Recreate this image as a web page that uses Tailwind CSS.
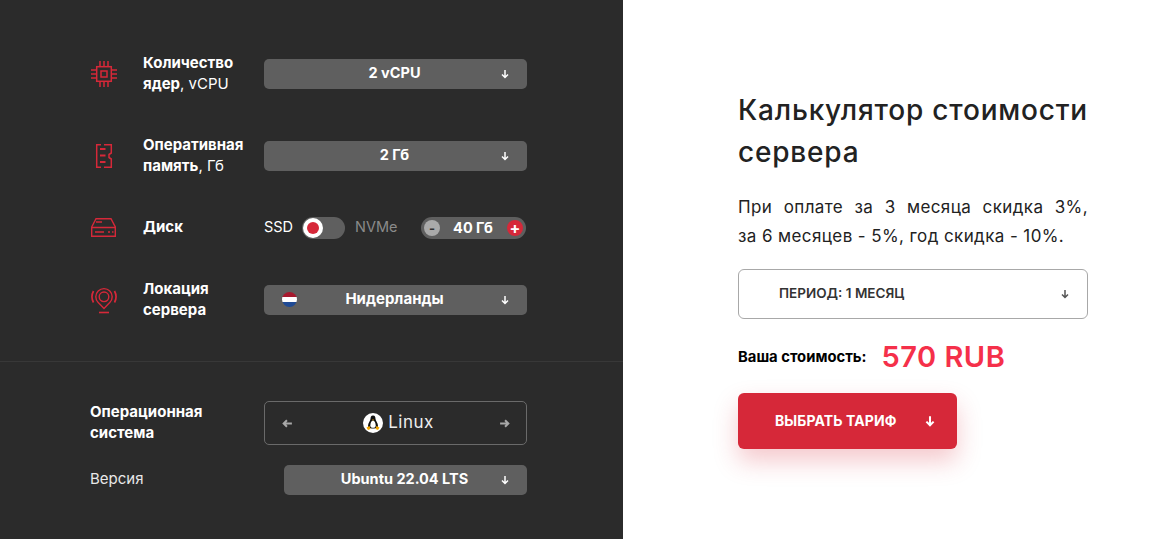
<!DOCTYPE html>
<html lang="ru">
<head>
  <meta charset="UTF-8">
  <title>Калькулятор стоимости сервера</title>
  <script src="https://cdn.jsdelivr.net/npm/@tailwindcss/browser@4"></script>
</head>
<body class="bg-white overflow-hidden font-['Inter','Liberation_Sans',sans-serif]">
  <div class="flex h-[539px] w-[1160px]">
    <!-- left: config -->
    <div class="w-[623px] shrink-0 bg-[#2b2b2b] text-white">
      <div class="pl-[90px] pr-[96px] pt-[52px] h-[361px]">
        <div class="flex items-center h-[44px]">
          <div class="w-[53px] shrink-0">
            <svg class="w-[28px] h-[28px]" viewBox="0 0 28 28" fill="none" stroke="#d62839" stroke-width="1.5"><rect x="6.700" y="6.700" width="14.600" height="14.600"/><rect x="11" y="11" width="6" height="6"/><path d="M10 1v5M14 1v5M18 1v5M10 22v5M14 22v5M18 22v5M1 10h5M1 14h5M1 18h5M22 10h5M22 14h5M22 18h5"/></svg>
          </div>
          <div class="w-[121px] shrink-0 text-[15px] leading-[21px] pb-[2px] whitespace-nowrap"><b class="font-bold">Количество<br>ядер</b>, vCPU</div>
          <div class="relative flex-1 h-[30px] rounded-[5px] bg-[#5f5f5f] flex items-center justify-center pr-[2px] pb-[2px] text-[14.500px] font-bold">2 vCPU
            <svg class="absolute right-[17px] top-[10px] w-[10px] h-[10px]" viewBox="0 0 10 10" fill="none" stroke="#fff" stroke-width="1.500"><path d="M5 1v7.500M2 5.500l3 3 3-3"/></svg>
          </div>
        </div>
        <div class="flex items-center h-[44px] mt-[38px]">
          <div class="w-[53px] shrink-0">
            <svg class="w-[28px] h-[28px]" viewBox="0 0 28 28" fill="none" stroke="#d62839" stroke-width="1.500"><path d="M11 2.700H6.700V25.300H11M14 2.700H21.300V11L19 12.500V15.500L21.300 17V25.300H14"/><path d="M10 7h5.500M10 13.500h5.500M10 20h5.500" stroke-width="2.200"/></svg>
          </div>
          <div class="w-[121px] shrink-0 text-[15px] leading-[21px] pb-[2px] whitespace-nowrap"><b class="font-bold">Оперативная<br>память</b>, Гб</div>
          <div class="relative flex-1 h-[30px] rounded-[5px] bg-[#5f5f5f] flex items-center justify-center pr-[2px] pb-[2px] text-[14.500px] font-bold">2 Гб
            <svg class="absolute right-[17px] top-[10px] w-[10px] h-[10px]" viewBox="0 0 10 10" fill="none" stroke="#fff" stroke-width="1.500"><path d="M5 1v7.500M2 5.500l3 3 3-3"/></svg>
          </div>
        </div>
        <div class="flex items-center h-[30px] mt-[35px]">
          <div class="w-[53px] shrink-0">
            <svg class="w-[28px] h-[28px]" viewBox="0 0 28 28" fill="none" stroke="#d62839" stroke-width="1.400"><path d="M1.700 13L6 4.700H21L25.300 13V22.300H1.700z"/><path d="M1.700 13.500H25.300M5 18H14M18 18h2M22 18h1.500M6 8h6"/></svg>
          </div>
          <div class="w-[121px] shrink-0 text-[15px] font-bold pb-[2px]">Диск</div>
          <span class="text-[14.500px] mr-[9px] pb-[2px]">SSD</span>
          <div class="w-[43px] h-[22px] rounded-full bg-[#5f5f5f] flex items-center pl-[1px]">
            <div class="w-[20px] h-[20px] rounded-full bg-white flex items-center justify-center"><div class="w-[12px] h-[12px] rounded-full bg-[#d62839]"></div></div>
          </div>
          <span class="text-[14.500px] text-[#8a8a8a] ml-[10px] pb-[2px]">NVMe</span>
          <div class="ml-auto mr-[1px] w-[105px] h-[22px] rounded-full bg-[#5f5f5f] flex items-center justify-between px-[3px] text-[14.500px] font-bold">
            <span class="w-[16px] h-[16px] rounded-full bg-[#aaaaaa] text-[#333] flex items-center justify-center text-[13px] leading-none">-</span>
            <span class="pb-[1px] pr-[1px]">40 Гб</span>
            <span class="w-[16px] h-[16px] rounded-full bg-[#d62839] flex items-center justify-center text-[16px] leading-none">+</span>
          </div>
        </div>
        <div class="flex items-center h-[44px] mt-[35px]">
          <div class="w-[53px] shrink-0">
            <svg class="w-[28px] h-[28px]" viewBox="0 0 28 28" fill="none" stroke="#d62839" stroke-width="1.400"><path d="M14 22.500L8.200 16.600A8.200 8.200 0 1 1 19.800 16.600Z"/><circle cx="14" cy="10.800" r="4.800"/><path d="M3.500 16.500A12 12 0 0 1 3.500 5M24.500 5A12 12 0 0 1 24.500 16.500" stroke-width="1.700"/><path d="M9 26.500H19" stroke-width="1.600"/></svg>
          </div>
          <div class="w-[121px] shrink-0 text-[15px] leading-[21px] font-bold pb-[2px]">Локация<br>сервера</div>
          <div class="relative flex-1 h-[30px] rounded-[5px] bg-[#5f5f5f] flex items-center justify-center pr-[2px] pb-[2px] text-[15px] font-bold">
            <span class="absolute left-[18px] top-[7px] w-[15px] h-[15px] rounded-full overflow-hidden flex flex-col">
              <i class="h-[5px] bg-[#a6192e]"></i><i class="h-[5px] bg-white"></i><i class="h-[5px] bg-[#1f4a94]"></i>
            </span>
            Нидерланды
            <svg class="absolute right-[17px] top-[10px] w-[10px] h-[10px]" viewBox="0 0 10 10" fill="none" stroke="#fff" stroke-width="1.500"><path d="M5 1v7.500M2 5.500l3 3 3-3"/></svg>
          </div>
        </div>
      </div>
      <div class="border-t border-[#383838] pl-[90px] pr-[96px] pt-[39px]">
        <div class="flex items-center h-[44px]">
          <div class="w-[174px] shrink-0 text-[15px] leading-[21px] font-bold pb-[2px]">Операционная<br>система</div>
          <div class="flex-1 h-[44px] rounded-[5px] border border-[#6a6a6a] flex items-center justify-between pl-[17px] pr-[16px]">
            <svg class="w-[11px] h-[11px]" viewBox="0 0 10 10" fill="none" stroke="#a8a8a8" stroke-width="1.800"><path d="M9 5H1.500M4.500 2l-3 3 3 3"/></svg>
            <div class="flex items-center gap-[5px] ml-[5px] text-[17px] tracking-[0.5px] text-[#eeeeee]">
              <svg class="w-[20px] h-[20px]" viewBox="0 0 20 20"><circle cx="10" cy="10" r="10" fill="#fff"/><path d="M10 2.500c-2 0-2.500 1.700-2.500 3.500 0 1.500-2.500 4-2.500 7 0 1 1 2.500 5 2.500s5-1.500 5-2.500c0-3-2.500-5.500-2.500-7 0-1.800-.5-3.500-2.500-3.500z" fill="#111"/><path d="M10 7.500c-1.500 0-2.700 2.500-2.700 5 0 1.500 1 2.300 2.700 2.300s2.700-.8 2.700-2.300c0-2.500-1.200-5-2.700-5z" fill="#fff"/><path d="M9 6.500h2l-1 1.200zM3.500 14.500l3-1.500 1 3-2.500 1zM16.500 14.500l-3-1.500-1 3 2.500 1z" fill="#f5a800"/></svg>
              Linux
            </div>
            <svg class="w-[11px] h-[11px]" viewBox="0 0 10 10" fill="none" stroke="#a8a8a8" stroke-width="1.800"><path d="M1 5h7.500M5.500 2l3 3-3 3"/></svg>
          </div>
        </div>
        <div class="flex items-center h-[30px] mt-[20px]">
          <div class="w-[194px] shrink-0 text-[15px] text-[#e8e8e8] pb-[2px]">Версия</div>
          <div class="relative flex-1 h-[30px] rounded-[5px] bg-[#5f5f5f] flex items-center justify-center pr-[2px] pb-[2px] text-[14.500px] font-bold">Ubuntu 22.04 LTS
            <svg class="absolute right-[17px] top-[10px] w-[10px] h-[10px]" viewBox="0 0 10 10" fill="none" stroke="#fff" stroke-width="1.500"><path d="M5 1v7.500M2 5.500l3 3 3-3"/></svg>
          </div>
        </div>
      </div>
    </div>
    <!-- right: result -->
    <div class="flex-1 pl-[115px] pr-[72px] pt-[89px]">
      <h1 class="text-[28px] leading-[42px] font-medium tracking-[0.8px] text-[#222]">Калькулятор стоимости сервера</h1>
      <p class="mt-[20px] text-[17px] leading-[29px] tracking-[0.4px] text-[#222]">
        <span class="block [text-align-last:justify]">При оплате за 3 месяца скидка 3%,</span>
        <span class="block">за 6 месяцев - 5%, год скидка - 10%.</span>
      </p>
      <div class="mt-[18px] h-[50px] rounded-[6px] border border-[#a8a8a8] flex items-center justify-between pl-[40px] pr-[17px] pb-[1px] text-[13.500px] font-semibold text-[#333]">
        ПЕРИОД: 1 МЕСЯЦ
        <svg class="w-[10px] h-[10px]" viewBox="0 0 10 10" fill="none" stroke="#555" stroke-width="1.500"><path d="M5 1v7.500M2 5.500l3 3 3-3"/></svg>
      </div>
      <div class="mt-[20px] flex items-center h-[36px]">
        <span class="text-[14.800px] font-bold text-black">Ваша стоимость:</span>
        <span class="ml-[15px] text-[29px] tracking-[0.5px] font-semibold text-[#f5304a]">570 RUB</span>
      </div>
      <div class="mt-[18px] w-[219px] h-[56px] rounded-[6px] bg-[#d62839] shadow-[0_12px_24px_rgba(214,40,57,0.25)] flex items-center justify-between pl-[37px] pr-[21px] pb-[1px] text-white text-[14px] tracking-[0.1px] font-bold">
        ВЫБРАТЬ ТАРИФ
        <svg class="w-[12px] h-[12px]" viewBox="0 0 10 10" fill="none" stroke="#fff" stroke-width="1.700"><path d="M5 1v7.500M2 5.500l3 3 3-3"/></svg>
      </div>
    </div>
  </div>
</body>
</html>
